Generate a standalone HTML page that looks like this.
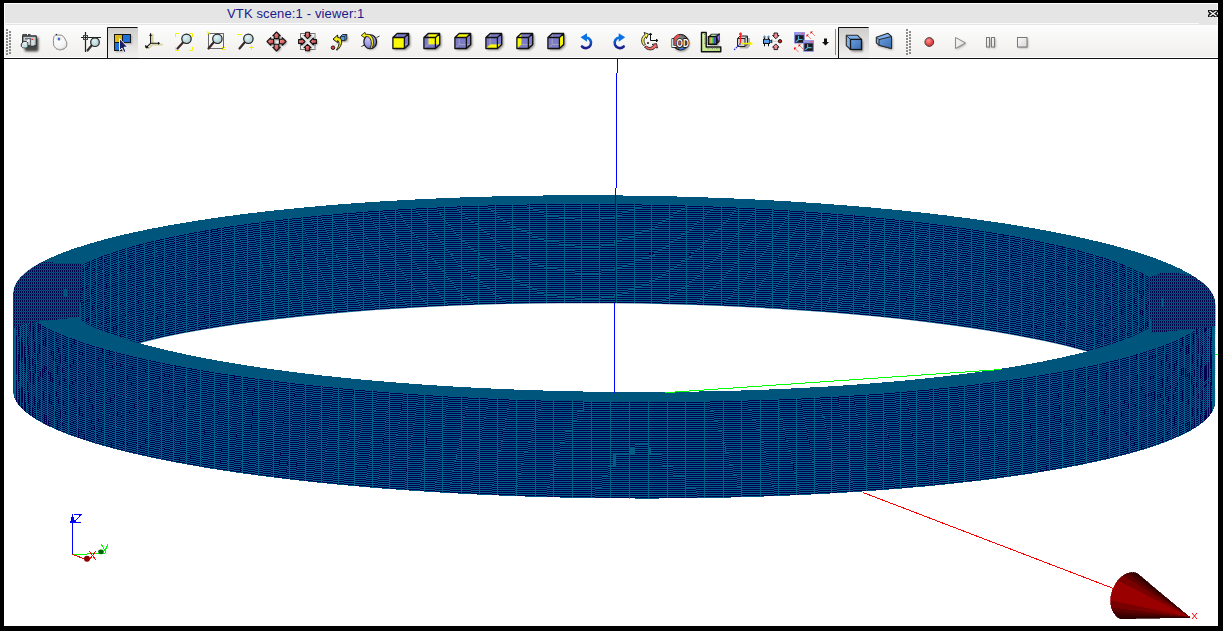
<!DOCTYPE html>
<html><head><meta charset="utf-8">
<style>
html,body{margin:0;padding:0;}
body{width:1223px;height:631px;background:#000;position:relative;overflow:hidden;font-family:"Liberation Sans",sans-serif;}
#win{position:absolute;left:4px;top:3px;width:1214px;height:623px;background:#fff;overflow:hidden;}
#title{position:absolute;left:0;top:0;width:1214px;height:22px;background:#e5e5e5;border-top:1px solid #fff;border-left:1px solid #fff;box-sizing:border-box;}
#title .t{position:absolute;left:222px;top:2px;font-size:13px;color:#1a1a8a;white-space:nowrap;letter-spacing:0.14px;}
#title .hl{position:absolute;left:0;top:19px;width:1194px;height:1px;background:#fafafa;}
#tb{position:absolute;left:0;top:22px;width:1214px;height:33px;background:linear-gradient(#fdfdfd,#f0efed);border-bottom:1px solid #fff;border-left:1px solid #fff;box-sizing:border-box;}
#tbline{position:absolute;left:0;top:55px;width:1214px;height:1px;background:#121212;}
#scene{position:absolute;left:0;top:0;}
</style></head><body>
<div id="win">
 <div id="title"><span class="t">VTK scene:1 - viewer:1</span><div class="hl"></div><div style="position:absolute;left:1212px;top:0;width:1px;height:21px;background:#fafafa"></div></div>
 <div id="tb"></div>
 <div id="tbline"></div>
</div>
<svg id="scene" width="1223" height="631" viewBox="0 0 1223 631">
<defs><clipPath id="vp"><rect x="4" y="59" width="1214" height="567"/></clipPath></defs>
<g><defs>
<linearGradient id="gcube" x1="0" y1="0" x2="1" y2="1"><stop offset="0" stop-color="#6a9ee0"/><stop offset="1" stop-color="#3a6cb0"/></linearGradient>
<linearGradient id="gplay" x1="0" y1="0" x2="1" y2="1"><stop offset="0" stop-color="#fafafa"/><stop offset="1" stop-color="#d8d8d8"/></linearGradient>
<linearGradient id="gruler" x1="0" y1="0" x2="1" y2="1"><stop offset="0" stop-color="#e0f8b0"/><stop offset="1" stop-color="#b4d878"/></linearGradient>
<linearGradient id="grain" x1="0" y1="0" x2="1" y2="0"><stop offset="0" stop-color="#f05070"/><stop offset="0.3" stop-color="#b0e040"/><stop offset="0.55" stop-color="#40d040"/><stop offset="0.8" stop-color="#4050d0"/><stop offset="1" stop-color="#9060d0"/></linearGradient>
<linearGradient id="grain2" x1="0" y1="0" x2="1" y2="0"><stop offset="0" stop-color="#f0a0a0"/><stop offset="0.4" stop-color="#a0f080"/><stop offset="0.8" stop-color="#7070e0"/><stop offset="1" stop-color="#a070e0"/></linearGradient>
<radialGradient id="glod" cx="0.4" cy="0.35" r="0.75"><stop offset="0" stop-color="#9a9a9a"/><stop offset="1" stop-color="#3a3a3a"/></radialGradient>
<radialGradient id="gsph" cx="0.35" cy="0.3" r="0.8"><stop offset="0" stop-color="#c4c4fc"/><stop offset="0.6" stop-color="#9494e0"/><stop offset="1" stop-color="#40407c"/></radialGradient>
<filter id="blur1" x="-30%" y="-30%" width="160%" height="160%"><feGaussianBlur stdDeviation="0.9"/></filter>
<radialGradient id="gmouse" cx="0.4" cy="0.35" r="0.75"><stop offset="0" stop-color="#ffffff"/><stop offset="0.7" stop-color="#f2f2f2"/><stop offset="1" stop-color="#c8c8c8"/></radialGradient>
<linearGradient id="gpress" x1="0" y1="0" x2="0" y2="1"><stop offset="0" stop-color="#cfcdcb"/><stop offset="1" stop-color="#f1f0ef"/></linearGradient>
<linearGradient id="gblue" x1="0" y1="0" x2="0" y2="1"><stop offset="0" stop-color="#0a78e8"/><stop offset="1" stop-color="#1c1c8a"/></linearGradient>
<radialGradient id="gred" cx="0.4" cy="0.35" r="0.7"><stop offset="0" stop-color="#ff9090"/><stop offset="1" stop-color="#d02020"/></radialGradient>
<radialGradient id="glens" cx="0.4" cy="0.35" r="0.7"><stop offset="0" stop-color="#e0f4f6"/><stop offset="1" stop-color="#a8c8cc"/></radialGradient>
<linearGradient id="garrow" x1="0" y1="0" x2="1" y2="1"><stop offset="0" stop-color="#f4a4a4"/><stop offset="1" stop-color="#c83030"/></linearGradient>
</defs>
<!-- grip -->
<g fill="#8c8c8c">
<path d="M6 29h2v2h-2zM6 32h2v2h-2zM6 35h2v2h-2zM6 38h2v2h-2zM6 41h2v2h-2zM6 44h2v2h-2zM6 47h2v2h-2zM6 50h2v2h-2zM6 53h2v2h-2z"/>
<path d="M9 31h2v2h-2zM9 34h2v2h-2zM9 37h2v2h-2zM9 40h2v2h-2zM9 43h2v2h-2zM9 46h2v2h-2zM9 49h2v2h-2zM9 52h2v2h-2z"/>
<path d="M906 29h2v2h-2zM906 32h2v2h-2zM906 35h2v2h-2zM906 38h2v2h-2zM906 41h2v2h-2zM906 44h2v2h-2zM906 47h2v2h-2zM906 50h2v2h-2zM906 53h2v2h-2z"/>
<path d="M909 31h2v2h-2zM909 34h2v2h-2zM909 37h2v2h-2zM909 40h2v2h-2zM909 43h2v2h-2zM909 46h2v2h-2zM909 49h2v2h-2zM909 52h2v2h-2z"/>
</g>
<!-- pressed buttons -->
<rect x="107" y="27" width="31" height="31" fill="url(#gpress)"/>
<path d="M107.5 58V27.5H137.5" fill="none" stroke="#111" stroke-width="1"/>
<rect x="838" y="27" width="31" height="31" fill="url(#gpress)"/>
<path d="M838.5 58V27.5H868.5" fill="none" stroke="#111" stroke-width="1"/>
<path d="M835.5 29V55" stroke="#8a8a8a" stroke-width="1"/>
<!-- 1 camera -->
<g>
<path d="M24.5 37.5H38.5V49.5C38.5 50.5 37.5 51.5 36.5 51.5H26.5C25 51.5 24.5 50.5 24.5 49.5Z" fill="#1e1e1e" opacity="0.8" filter="url(#blur1)"/>
<path d="M22 35.2H36C36.5 35.2 36.8 35.6 36.8 36.2V45.6C36.8 46.1 36.5 46.4 36 46.4H22Z" fill="#2e3236"/>
<path d="M22.5 33.9H27V35.5H22.5ZM28 33.9H30.5V35.5H28Z" fill="#2e3236"/>
<path d="M23.5 34.4H26.3M28.5 34.4H30" stroke="#6a7074" stroke-width="0.6"/>
<rect x="23.2" y="36.6" width="12.4" height="8.6" fill="#8e989e"/>
<rect x="23.8" y="37.1" width="11.3" height="7.6" fill="#c4ccd0"/>
<path d="M25 38.8H30" stroke="#3a3e42" stroke-width="0.9"/>
<rect x="30.6" y="38" width="3.5" height="7.6" fill="#d6dde0"/>
<path d="M30.6 38V45.6" stroke="#3a3e42" stroke-width="0.8"/>
<rect x="31.4" y="38.7" width="2" height="1.2" fill="#f01818"/>
<path d="M35.4 37V45" stroke="#9aa4a8" stroke-width="0.8"/>
<path d="M26.5 42.5L29.2 39.6" stroke="#fafafa" stroke-width="1.5"/>
<path d="M21.3 44L23.6 41.4H26.3L27.6 42.8V46.6L26.6 47.7H22.7L21.3 46.3Z" fill="#e8eaea" stroke="#161616" stroke-width="0.9"/>
<path d="M22.8 47.1H26.4L27 46.3V43.2" fill="none" stroke="#8ee0e8" stroke-width="0.9"/>
<path d="M22.6 44.5L25.5 46" stroke="#b8bcbc" stroke-width="0.6"/>
</g>
<!-- 2 mouse -->
<g>
<path d="M54 36.5C54.5 35.3 56 35 57.5 35L61 35.2C62.5 35.5 63.5 36.5 64.5 38L66.5 41.8C67 43 67 45.5 66.2 47C65 49 62 50 59.5 49.8C56.5 49.5 54.5 47.5 53.6 45C53.2 43 53.3 38.5 54 36.5Z" fill="url(#gmouse)" stroke="#7e7e7e" stroke-width="0.9"/>
<ellipse cx="59" cy="38.8" rx="2.8" ry="1.7" fill="#e0dcd0" opacity="0.9"/>
<ellipse cx="58.9" cy="39" rx="1.1" ry="1.6" fill="#3a62d8"/>
<circle cx="56.4" cy="34.6" r="0.8" fill="#333"/>
<path d="M56 48.5C58 50 62 50 64.5 48.5" stroke="#a8a8a8" stroke-width="1" fill="none"/>
</g>
<!-- 3 crosshair zoom -->
<g>
<path d="M85.5 32V52M81 37.5H101" stroke="#222" stroke-width="1.2"/>
<rect x="83.5" y="35.5" width="4" height="4" fill="none" stroke="#444" stroke-width="1"/>
<path d="M92 45L87.5 50.5" stroke="#333" stroke-width="2.2" stroke-linecap="round"/>
<circle cx="95" cy="42.2" r="4.3" fill="url(#glens)" stroke="#222" stroke-width="1.2"/>
</g>
<!-- 4 select (pressed) -->
<g>
<path d="M115.5 35.5H132.5V44.5H124V52.5H115.5Z" fill="#000" opacity="0.15"/>
<path d="M114 34H131V43H122.5V51H114Z" fill="#161616"/>
<rect x="115" y="35" width="7" height="7" fill="#d8b81c"/>
<rect x="123" y="35" width="7" height="7" fill="#1f70d8"/>
<rect x="115" y="43" width="7" height="7" fill="#1f70d8"/>
<path d="M119.5 38.5V50.5L122 48 124 52.5 126 51.5 124 47.3 127.5 47Z" fill="#1a2060" stroke="#fff" stroke-width="0.9"/>
</g>
<!-- 5 trihedron -->
<g fill="none">
<path d="M152.6 34V44.6H162.7M152.6 44.6L148 48.8" stroke="#d6d09a" stroke-width="1.7"/>
<path d="M150.6 33.2V43.3H159.9M150.6 43.3L146.8 46.8" stroke="#111" stroke-width="1.1"/>
<path d="M149.2 35.3H152M158.5 42V44.6" stroke="#111" stroke-width="0.9"/>
<path d="M145.5 45.5L146 48 148.3 47.5Z" fill="#111" stroke="#111" stroke-width="0.9"/>
</g>
<!-- 6 fit all -->
<g>
<path d="M175.5 37V33.5H179M189 33.5H192.5V37M175.5 47V50.5H179M189 50.5H192.5V47" fill="none" stroke="#f4f400" stroke-width="1"/>
<path d="M183 42.5L177.5 48.5" stroke="#3a2a2a" stroke-width="2.2" stroke-linecap="round"/>
<circle cx="186.5" cy="38.8" r="4.7" fill="url(#glens)" stroke="#222" stroke-width="1.2"/>
</g>
<!-- 7 fit area -->
<g>
<rect x="208.5" y="33.5" width="15" height="15" fill="none" stroke="#6a6a6a" stroke-width="1"/>
<path d="M213.5 42.5L208.5 48.5" stroke="#3a2a2a" stroke-width="2.2" stroke-linecap="round"/>
<circle cx="217.4" cy="38.8" r="4.7" fill="url(#glens)" stroke="#222" stroke-width="1.2"/>
<path d="M207 31.5L210 34.5M210 31.5L207 34.5M222 47L225 50M225 47L222 50" stroke="#f0f000" stroke-width="1"/>
</g>
<!-- 8 zoom -->
<g>
<path d="M244.5 42.5L239.5 48.5" stroke="#3a2a2a" stroke-width="2.2" stroke-linecap="round"/>
<circle cx="248.4" cy="38.8" r="4.7" fill="url(#glens)" stroke="#222" stroke-width="1.2"/>
<path d="M237 34.5H242M249 47.5H254M251.5 45V50" stroke="#f0f000" stroke-width="1"/>
</g>
<!-- 9 pan -->
<g filter="url(#blur1)" opacity="0.5" fill="#000"><path d="M277.5 33L281.5 37H280V40H275V37H273.5ZM277.5 52L281.5 48H280V45H275V48H273.5ZM268 42.5L272 38.5V40H275V45H272V46.5ZM287 42.5L283 38.5V40H280V45H283V46.5Z"/></g>
<g fill="url(#garrow)" stroke="#111" stroke-width="1.1" stroke-linejoin="round">
<path d="M276.5 32L280.3 35.8H278.8V38.6H274.2V35.8H272.7Z"/>
<path d="M276.5 51L280.3 47.2H278.8V44.2H274.2V47.2H272.7Z"/>
<path d="M267 41.5L270.8 37.7V39.2H273.6V43.8H270.8V45.3Z"/>
<path d="M286 41.5L282.2 37.7V39.2H279.4V43.8H282.2V45.3Z"/>
</g>
<!-- 10 global pan -->
<g>
<rect x="300.5" y="33.5" width="14.5" height="16" fill="#fafafa" stroke="#777" stroke-width="1"/>
<path d="M301 34L314.5 49M314.5 34L301 49" stroke="#e2e2e2" stroke-width="1"/>
<g filter="url(#blur1)" opacity="0.45" fill="#000"><path d="M308.5 39.6L312 36.2H310.4V33.2H306.6V36.2H305ZM308.5 45.3L312 48.7H310.4V51.7H306.6V48.7H305ZM306 42.5L302.6 39V40.6H299.6V44.4H302.6V46ZM311 42.5L314.4 39V40.6H317.4V44.4H314.4V46Z"/></g>
<g fill="url(#garrow)" stroke="#111" stroke-width="1.1" stroke-linejoin="round">
<path d="M307.5 38.6L311 35.2H309.4V32.2H305.6V35.2H304Z"/>
<path d="M307.5 44.3L311 47.7H309.4V50.7H305.6V47.7H304Z"/>
<path d="M305 41.5L301.6 38V39.6H298.6V43.4H301.6V45Z"/>
<path d="M310 41.5L313.4 38V39.6H316.4V43.4H313.4V45Z"/>
</g>
</g>
<!-- 11 rotation point -->
<g>
<path d="M340.5 37H347.5V41.5H340.5Z" fill="#000" opacity="0.5" filter="url(#blur1)"/>
<path d="M340.5 36.5L342.5 34.5H346.8V38.8L344.8 40.6H340.5Z" fill="#5a9ae0" stroke="#1a1a1a" stroke-width="0.9"/>
<path d="M340.5 36.5H344.8V40.6M344.8 36.5L346.8 34.5" fill="none" stroke="#1a1a1a" stroke-width="0.7"/>
<path d="M337 50.3C340.5 47.5 342.6 43 341.2 39.5 340.5 38 339.2 37.5 337.8 37.6L337.6 35 333 39.2 337.8 42.8 337.7 40.5C338.8 41.5 339.2 43.2 338.8 45 338.3 47 337.3 48.8 336.4 49.8Z" fill="#f4ec10" stroke="#111" stroke-width="1"/>
<path d="M334.5 46.3L338.5 42" stroke="#777" stroke-width="0.6" stroke-dasharray="0.8 0.8"/>
<circle cx="333" cy="47.7" r="1.8" fill="#e83838" stroke="#111" stroke-width="0.9"/>
</g>
<!-- 12 rotate -->
<g>
<path d="M361.3 46.6L364.5 45M376.5 37.6L379.5 36" stroke="#222" stroke-width="0.9"/>
<ellipse cx="371" cy="42.8" rx="6.5" ry="7" fill="#000" opacity="0.35" filter="url(#blur1)"/>
<ellipse cx="370.2" cy="41.8" rx="6.4" ry="7" fill="url(#gsph)" stroke="#111" stroke-width="1.1"/>
<path d="M371.6 48.6C374.2 45 374.4 38.6 370.6 35.2 369.4 34.3 367.2 34.1 365.7 34.5L365 32.3 361.2 35.4 365.2 38.2 365.5 36.6C366.8 36.4 368.4 36.7 369.3 37.6 372 40.5 371.8 45.5 370 48.3Z" fill="#f4ec10" stroke="#111" stroke-width="0.8"/>
</g>
<!-- 19/20 rotate arrows -->
<g fill="none" stroke="url(#gblue)" stroke-width="2.6" stroke-linecap="round">
<path d="M582 46.5A5.3 5.3 0 1 0 586 37.5"/>
<path d="M623.7 46.5A5.3 5.3 0 1 1 619.7 37.5"/>
</g>
<path d="M580.5 37.3L587 33.2V41.8Z" fill="#0a72e4"/>
<path d="M625.2 37.3L618.7 33.2V41.8Z" fill="#0a72e4"/>
<!-- 21 reset -->
<g>
<path d="M643.5 45.5C640.5 42 641 37 645 34.5L644 32.5 648.5 34 646.5 38.5 646 36.8C643.5 38.5 643.5 42 645.5 44.5Z" fill="#f4f060" stroke="#222" stroke-width="0.9"/>
<path d="M644.5 47C647 50.5 653 51 655.5 47.5L657.5 48 656.5 43.5 652 44.5 653.5 45.5C651.5 48 648 48 646.5 46Z" fill="#f86a6a" stroke="#222" stroke-width="0.9"/>
<path d="M650.5 33V40.5H658M649.2 35L650.5 33 651.8 35M656 39.2L658 40.5 656 41.8" fill="none" stroke="#111" stroke-width="1"/>
<circle cx="648" cy="43" r="1" fill="#111"/>
</g>
<!-- 22 LOD -->
<g>
<circle cx="681.5" cy="43.5" r="8" fill="#000" opacity="0.45" filter="url(#blur1)"/>
<circle cx="680.5" cy="42.2" r="7.8" fill="url(#glod)" stroke="#111" stroke-width="1"/>
<path d="M675 45A7 7 0 0 1 679 35.3" fill="none" stroke="#f04848" stroke-width="2.4"/>
<path d="M679.5 48.5A6.8 6.8 0 0 0 684.5 47.2" fill="none" stroke="#3a7ae8" stroke-width="1.8"/>
<text transform="translate(680.2 46.8) scale(0.8 1)" text-anchor="middle" font-family="Liberation Sans" font-weight="bold" font-size="10.2" fill="#fff" stroke="#111" stroke-width="1.7" paint-order="stroke" stroke-linejoin="round">LOD</text>
</g>
<!-- 23 graduated axes -->
<g>
<path d="M701.5 32.5H706.2V47H720.8V51.8H701.5Z" fill="url(#gruler)" stroke="#111" stroke-width="1.4" stroke-linejoin="round"/>
<path d="M704 34.5H706M704.5 36.7H706M704 38.9H706M704.5 41.1H706M704 43.3H706M708 47V49M710.2 47V48.5M712.4 47V49M714.6 47V48.5M716.8 47V49M719 47V48.5" stroke="#666" stroke-width="0.8"/>
<path d="M709.5 38H719V46H710Z" fill="#555" opacity="0.5" filter="url(#blur1)"/>
<path d="M708.3 36.5L711.3 33.8H719.7V41.7L716.6 44.4H708.3Z" fill="#222"/>
<path d="M711.6 34.6H719V41.2L717.2 37.2H710.5Z" fill="url(#grain2)"/>
<rect x="709.2" y="37.4" width="6.6" height="6.2" fill="url(#grain)"/>
<path d="M708.3 36.5H716.6V44.4H708.3ZM716.6 36.5L719.7 33.8" fill="none" stroke="#111" stroke-width="1.2"/>
</g>
<!-- 24 trihedron cube -->
<g>
<path d="M738.5 38.5L741 36.5H748.5V44.5L746 47H738.5Z" fill="#333" opacity="0.35" transform="translate(1.5 1.5)"/>
<path d="M737.5 38.5L740 36H747.5V44L745 46.5H737.5Z" fill="#d2d2d2" stroke="#222" stroke-width="1"/>
<path d="M737.5 38.5H745V46.5M745 38.5L747.5 36" fill="none" stroke="#222" stroke-width="1"/>
<path d="M740.5 43.5V32.5M739 34H742" stroke="#ff2020" stroke-width="1.3"/>
<path d="M740.5 43.5H752.5M750.5 42V45" stroke="#f0f000" stroke-width="1.3"/>
<path d="M740.5 43.5L733.5 50.5" stroke="#2a2ae8" stroke-width="1.3" stroke-dasharray="1.5 1"/>
</g>
<!-- 25 camera focus -->
<g>
<path d="M764.5 37.5V39.5M768.5 37.5V39.5M764.5 43.5V46.3M768.5 43.5V46.3" stroke="#111" stroke-width="1"/>
<path d="M764.5 35.8L765.6 36.9 764.5 38 763.4 36.9ZM768.5 35.8L769.6 36.9 768.5 38 767.4 36.9Z" fill="#5aa0e8" stroke="#222" stroke-width="0.5"/>
<rect x="763.5" y="39.3" width="6" height="4.2" fill="#5aa0e8" stroke="#111" stroke-width="1"/>
<rect x="769.6" y="40.3" width="1.8" height="2.2" fill="#5aa0e8" stroke="#111" stroke-width="0.6"/>
<path d="M771.8 39.6V43.2" stroke="#111" stroke-width="0.9"/>
<path d="M773.5 41.3H778" stroke="#888" stroke-width="0.9" stroke-dasharray="0.8 1.2"/>
<path d="M774 33H777.6V35.5H779L775.8 38.8 772.6 35.5H774Z" fill="#f08a98" stroke="#111" stroke-width="0.9"/>
<path d="M774 49.6H777.6V47.2H779L775.8 43.9 772.6 47.2H774Z" fill="#f08a98" stroke="#111" stroke-width="0.9"/>
<circle cx="780" cy="41.2" r="1.7" fill="#e01818" stroke="#111" stroke-width="0.9"/>
</g>
<!-- 26 sync -->
<g><rect x="794.2" y="32.1" width="10.6" height="11.4" fill="#7a7ad8"/><rect x="794.2" y="32.1" width="10.6" height="2.3" fill="#9a9ae8"/><rect x="801.2" y="32.9" width="3" height="1.2" fill="#f06070"/>
<rect x="795.3000000000001" y="35.2" width="8.4" height="7.5" fill="#1c1c1c"/>
<path d="M798.5 36.1V39.5H802.5M798.5 39.5L796.2 41.7" fill="none" stroke="#5ab0dc" stroke-width="1.2"/><rect x="803.3" y="40.3" width="10.6" height="11.4" fill="#7a7ad8"/><rect x="803.3" y="40.3" width="10.6" height="2.3" fill="#9a9ae8"/><rect x="810.3" y="41.099999999999994" width="3" height="1.2" fill="#f06070"/>
<rect x="804.4" y="43.4" width="8.4" height="7.5" fill="#1c1c1c"/>
<path d="M807.5999999999999 44.3V47.699999999999996H811.5999999999999M807.5999999999999 47.699999999999996L805.3 49.9" fill="none" stroke="#5ab0dc" stroke-width="1.2"/>
<path d="M807.5 35.5L810.5 38.5M811.5 32.5L814.5 35.5M799.5 45.5L802.5 48.5M795 48.5L798 51.5" stroke="#e80808" stroke-width="1" stroke-dasharray="1 0.6"/>
<path d="M806.5 34.5H809L806.5 37ZM810.5 31.5H813L810.5 34ZM798.5 44.5H801L798.5 47ZM794 47.5H796.5L794 50Z" fill="#e80808"/>
</g>
<!-- extension arrow -->
<path d="M824 38.5H827V42H829L825.5 45.5 822 42H824Z" fill="#111"/>
<!-- 27 parallel -->
<g>
<path d="M848 41H863V51.5H852Z" fill="#000" opacity="0.45" filter="url(#blur1)"/>
<path d="M846.3 35.3H857.6L861.5 39.4V49.5H850.5L846.3 45.6Z" fill="#7eb0ee" stroke="#2a2a2a" stroke-width="1.1" stroke-linejoin="round"/>
<path d="M846.8 36L850.5 39.4H861" fill="none" stroke="#333" stroke-width="0.9"/>
<rect x="850.5" y="39.4" width="11" height="10.1" fill="url(#gcube)" stroke="#161616" stroke-width="1.3"/>
</g>
<!-- 28 perspective -->
<g>
<path d="M878 39L892.5 37.5V50L878 46Z" fill="#000" opacity="0.45" filter="url(#blur1)"/>
<path d="M876.3 37.2L887.8 33.2 891.5 36.5V48.5L879 45.2 876.3 42.8Z" fill="#7eb0ee" stroke="#2a2a2a" stroke-width="1.1" stroke-linejoin="round"/>
<path d="M879 39.6L891.5 36.5V48.5L879 45.2Z" fill="url(#gcube)" stroke="#2a2a2a" stroke-width="1"/>
<path d="M876.6 37.5L879 39.6" stroke="#333" stroke-width="0.8"/>
</g>
<!-- record/play/pause/stop -->
<circle cx="929.3" cy="42" r="4.4" fill="url(#gred)" stroke="#333" stroke-width="0.9"/>
<g filter="url(#blur1)" fill="#555" opacity="0.55"><path d="M956.5 38.5L966.5 44 956.5 49.5Z"/><rect x="987.5" y="38.5" width="3" height="9.5"/><rect x="992.5" y="38.5" width="3" height="9.5"/><rect x="1018.5" y="38.5" width="9.5" height="9.5"/></g>
<path d="M955.5 37.5L965.5 43 955.5 48.5Z" fill="url(#gplay)" stroke="#8a8a8a" stroke-width="1"/>
<g fill="url(#gplay)" stroke="#7a7a7a" stroke-width="1"><rect x="986.5" y="37.5" width="3" height="9.5"/><rect x="991.5" y="37.5" width="3" height="9.5"/><rect x="1017.5" y="37.5" width="9.5" height="9.5"/></g>
<!-- close -->
<path d="M1208 10H1212L1213 11 1214 10H1218V12L1216.5 13.5 1218 15V17H1214L1213 16 1212 17H1208V15L1209.5 13.5 1208 12Z" fill="#111"/>
<path d="M1209.5 11L1216.5 16.2M1216.5 11L1209.5 16.2" stroke="#fff" stroke-width="1.3"/>

<g><path d="M394.5 50.1 394.5 39.1 398.8 35.1 410.3 35.1 410.3 46.1 406.0 50.1Z" fill="#000" opacity="0.45" filter="url(#blur1)"/><path d="M392.9 48.5 392.9 37.5 397.2 33.5 408.7 33.5 408.7 44.5 404.4 48.5Z" fill="#7b7bc9"/><path d="M397.2 33.5V44.5H408.7M392.9 48.5L397.2 44.5" fill="none" stroke="#a8a8b0" stroke-width="0.9"/><path d="M392.9 37.5 404.4 37.5 404.4 48.5 392.9 48.5Z" fill="#f8f80a"/><path d="M392.9 37.5 404.4 37.5 404.4 48.5 392.9 48.5ZM392.9 37.5L397.2 33.5H408.7V44.5L404.4 48.5M404.4 37.5L408.7 33.5" fill="none" stroke="#111" stroke-width="1.3" stroke-linejoin="round"/></g>
<g><path d="M425.5 50.1 425.5 39.1 429.8 35.1 441.3 35.1 441.3 46.1 437.0 50.1Z" fill="#000" opacity="0.45" filter="url(#blur1)"/><path d="M423.9 48.5 423.9 37.5 428.2 33.5 439.7 33.5 439.7 44.5 435.4 48.5Z" fill="#7b7bc9"/><path d="M428.2 33.5 439.7 33.5 439.7 44.5 428.2 44.5Z" fill="#f8f80a"/><path d="M428.2 33.5V44.5H439.7M423.9 48.5L428.2 44.5" fill="none" stroke="#a8a8b0" stroke-width="0.9"/><path d="M423.9 37.5 435.4 37.5 435.4 48.5 423.9 48.5ZM423.9 37.5L428.2 33.5H439.7V44.5L435.4 48.5M435.4 37.5L439.7 33.5" fill="none" stroke="#111" stroke-width="1.3" stroke-linejoin="round"/></g>
<g><path d="M456.5 50.1 456.5 39.1 460.8 35.1 472.3 35.1 472.3 46.1 468.0 50.1Z" fill="#000" opacity="0.45" filter="url(#blur1)"/><path d="M454.9 48.5 454.9 37.5 459.2 33.5 470.7 33.5 470.7 44.5 466.4 48.5Z" fill="#7b7bc9"/><path d="M459.2 33.5V44.5H470.7M454.9 48.5L459.2 44.5" fill="none" stroke="#a8a8b0" stroke-width="0.9"/><path d="M454.9 37.5 459.2 33.5 470.7 33.5 466.4 37.5Z" fill="#f8f80a"/><path d="M454.9 37.5 466.4 37.5 466.4 48.5 454.9 48.5ZM454.9 37.5L459.2 33.5H470.7V44.5L466.4 48.5M466.4 37.5L470.7 33.5" fill="none" stroke="#111" stroke-width="1.3" stroke-linejoin="round"/></g>
<g><path d="M487.5 50.1 487.5 39.1 491.8 35.1 503.3 35.1 503.3 46.1 499.0 50.1Z" fill="#000" opacity="0.45" filter="url(#blur1)"/><path d="M485.9 48.5 485.9 37.5 490.2 33.5 501.7 33.5 501.7 44.5 497.4 48.5Z" fill="#7b7bc9"/><path d="M490.2 33.5V44.5H501.7M485.9 48.5L490.2 44.5" fill="none" stroke="#a8a8b0" stroke-width="0.9"/><path d="M485.9 48.5 490.2 44.5 501.7 44.5 497.4 48.5Z" fill="#f8f80a"/><path d="M485.9 37.5 497.4 37.5 497.4 48.5 485.9 48.5ZM485.9 37.5L490.2 33.5H501.7V44.5L497.4 48.5M497.4 37.5L501.7 33.5" fill="none" stroke="#111" stroke-width="1.3" stroke-linejoin="round"/></g>
<g><path d="M518.5 50.1 518.5 39.1 522.8 35.1 534.3 35.1 534.3 46.1 530.0 50.1Z" fill="#000" opacity="0.45" filter="url(#blur1)"/><path d="M516.9 48.5 516.9 37.5 521.2 33.5 532.7 33.5 532.7 44.5 528.4 48.5Z" fill="#7b7bc9"/><path d="M521.2 33.5V44.5H532.7M516.9 48.5L521.2 44.5" fill="none" stroke="#a8a8b0" stroke-width="0.9"/><path d="M516.9 37.5 521.2 33.5 521.2 44.5 516.9 48.5Z" fill="#f8f80a"/><path d="M516.9 37.5 528.4 37.5 528.4 48.5 516.9 48.5ZM516.9 37.5L521.2 33.5H532.7V44.5L528.4 48.5M528.4 37.5L532.7 33.5" fill="none" stroke="#111" stroke-width="1.3" stroke-linejoin="round"/></g>
<g><path d="M549.5 50.1 549.5 39.1 553.8 35.1 565.3 35.1 565.3 46.1 561.0 50.1Z" fill="#000" opacity="0.45" filter="url(#blur1)"/><path d="M547.9 48.5 547.9 37.5 552.2 33.5 563.7 33.5 563.7 44.5 559.4 48.5Z" fill="#7b7bc9"/><path d="M552.2 33.5V44.5H563.7M547.9 48.5L552.2 44.5" fill="none" stroke="#a8a8b0" stroke-width="0.9"/><path d="M559.4 37.5 563.7 33.5 563.7 44.5 559.4 48.5Z" fill="#f8f80a"/><path d="M547.9 37.5 559.4 37.5 559.4 48.5 547.9 48.5ZM547.9 37.5L552.2 33.5H563.7V44.5L559.4 48.5M559.4 37.5L563.7 33.5" fill="none" stroke="#111" stroke-width="1.3" stroke-linejoin="round"/></g></g>
<g clip-path="url(#vp)">
<defs><pattern id="dots" width="2" height="3" patternUnits="userSpaceOnUse"><rect width="2" height="3" fill="#00557d"/><rect width="1" height="2" fill="#00004a"/><rect x="1" y="2" width="1" height="1" fill="#003a66"/></pattern><clipPath id="cw"><path d="M1215.2 303.8A601 103.1 0.516 0 1 613.3 401.5A601 103.1 0.516 0 1 13.3 293L13.3 391.4A600.9 101.6 0.516 0 0 613.3 498.4A600.9 101.6 0.516 0 0 1215.1 402.2Z"/></clipPath><clipPath id="csil"><path d="M13.3 293A601 103.1 0.516 0 1 615.1 195.4A601 103.1 0.516 0 1 1215.2 303.8L1215.1 402.2A600.9 101.6 0.516 0 1 613.3 498.4A600.9 101.6 0.516 0 1 13.3 391.4Z"/></clipPath><clipPath id="ci"><path d="M1170.5 302.7A557.3 94.2 0.516 0 1 612.3 391.9A557.3 94.2 0.516 0 1 55.9 292.7A557.3 94.2 0.516 0 1 614 203.5A557.3 94.2 0.516 0 1 1170.5 302.7Z"/></clipPath><clipPath id="cib"><path d="M1170.4 401.1A557.3 92.8 0.516 0 1 612.4 488.9A557.3 92.8 0.516 0 1 55.9 391.1A557.3 92.8 0.516 0 1 614 303.3A557.3 92.8 0.516 0 1 1170.4 401.1Z"/></clipPath><clipPath id="cx"><rect x="81" y="0" width="1069" height="631"/></clipPath></defs>
<g shape-rendering="crispEdges">
<path d="M13.3 293A601 103.1 0.516 0 1 615.1 195.4A601 103.1 0.516 0 1 1215.2 303.8L1215.1 402.2A600.9 101.6 0.516 0 1 613.3 498.4A600.9 101.6 0.516 0 1 13.3 391.4Z" fill="#00557d"/>
<path d="M1215.2 303.8A601 103.1 0.516 0 1 613.3 401.5A601 103.1 0.516 0 1 13.3 293L13.3 391.4A600.9 101.6 0.516 0 0 613.3 498.4A600.9 101.6 0.516 0 0 1215.1 402.2Z" fill="#005e84"/>
<g clip-path="url(#cw)" fill="none"><path stroke="#000050" d="M1215.2 304.8A601 103 0.516 0 1 613.3 402.5A601 103 0.516 0 1 13.3 294M1215.2 306.9A601 103 0.516 0 1 613.3 404.5A601 103 0.516 0 1 13.3 296.1M1215.2 308.9A601 103 0.516 0 1 613.3 406.5A601 103 0.516 0 1 13.3 298.1M1215.2 311A601 102.9 0.516 0 1 613.3 408.5A601 102.9 0.516 0 1 13.3 300.2M1215.2 313A601 102.9 0.516 0 1 613.3 410.5A601 102.9 0.516 0 1 13.3 302.2M1215.2 315.1A601 102.9 0.516 0 1 613.3 412.6A601 102.9 0.516 0 1 13.3 304.3M1215.2 317.1A601 102.9 0.516 0 1 613.3 414.6A601 102.9 0.516 0 1 13.3 306.3M1215.1 319.2A601 102.8 0.516 0 1 613.3 416.6A601 102.8 0.516 0 1 13.3 308.4M1215.1 321.2A601 102.8 0.516 0 1 613.3 418.6A601 102.8 0.516 0 1 13.3 310.4M1215.1 323.3A601 102.8 0.516 0 1 613.3 420.6A601 102.8 0.516 0 1 13.3 312.5M1215.1 325.3A601 102.7 0.516 0 1 613.3 422.7A601 102.7 0.516 0 1 13.3 314.5M1215.1 327.4A601 102.7 0.516 0 1 613.3 424.7A601 102.7 0.516 0 1 13.3 316.6M1215.1 329.4A601 102.7 0.516 0 1 613.3 426.7A601 102.7 0.516 0 1 13.3 318.6M1215.1 331.5A601 102.6 0.516 0 1 613.3 428.7A601 102.6 0.516 0 1 13.3 320.7M1215.1 333.5A600.9 102.6 0.516 0 1 613.3 430.7A600.9 102.6 0.516 0 1 13.3 322.7M1215.1 335.6A600.9 102.6 0.516 0 1 613.3 432.8A600.9 102.6 0.516 0 1 13.3 324.8M1215.1 337.6A600.9 102.5 0.516 0 1 613.3 434.8A600.9 102.5 0.516 0 1 13.3 326.8M1215.1 339.7A600.9 102.5 0.516 0 1 613.3 436.8A600.9 102.5 0.516 0 1 13.3 328.9M1215.1 341.7A600.9 102.5 0.516 0 1 613.3 438.8A600.9 102.5 0.516 0 1 13.3 330.9M1215.1 343.8A600.9 102.4 0.516 0 1 613.3 440.8A600.9 102.4 0.516 0 1 13.3 333M1215.1 345.8A600.9 102.4 0.516 0 1 613.3 442.8A600.9 102.4 0.516 0 1 13.3 335M1215.1 347.9A600.9 102.4 0.516 0 1 613.3 444.9A600.9 102.4 0.516 0 1 13.3 337.1M1215.1 349.9A600.9 102.4 0.516 0 1 613.3 446.9A600.9 102.4 0.516 0 1 13.3 339.1M1215.1 352A600.9 102.3 0.516 0 1 613.3 448.9A600.9 102.3 0.516 0 1 13.3 341.2M1215.1 354A600.9 102.3 0.516 0 1 613.3 450.9A600.9 102.3 0.516 0 1 13.3 343.2M1215.1 356.1A600.9 102.3 0.516 0 1 613.3 452.9A600.9 102.3 0.516 0 1 13.3 345.3M1215.1 358.1A600.9 102.2 0.516 0 1 613.3 455A600.9 102.2 0.516 0 1 13.3 347.3M1215.1 360.2A600.9 102.2 0.516 0 1 613.3 457A600.9 102.2 0.516 0 1 13.3 349.4M1215.1 362.2A600.9 102.2 0.516 0 1 613.3 459A600.9 102.2 0.516 0 1 13.3 351.4M1215.1 364.3A600.9 102.1 0.516 0 1 613.3 461A600.9 102.1 0.516 0 1 13.3 353.5M1215.1 366.3A600.9 102.1 0.516 0 1 613.3 463A600.9 102.1 0.516 0 1 13.3 355.5M1215.1 368.4A600.9 102.1 0.516 0 1 613.3 465A600.9 102.1 0.516 0 1 13.3 357.6M1215.1 370.4A600.9 102 0.516 0 1 613.3 467.1A600.9 102 0.516 0 1 13.3 359.6M1215.1 372.5A600.9 102 0.516 0 1 613.3 469.1A600.9 102 0.516 0 1 13.3 361.7M1215.1 374.5A600.9 102 0.516 0 1 613.3 471.1A600.9 102 0.516 0 1 13.3 363.7M1215.1 376.6A600.9 101.9 0.516 0 1 613.3 473.1A600.9 101.9 0.516 0 1 13.3 365.8M1215.1 378.6A600.9 101.9 0.516 0 1 613.3 475.1A600.9 101.9 0.516 0 1 13.3 367.8M1215.1 380.7A600.9 101.9 0.516 0 1 613.3 477.2A600.9 101.9 0.516 0 1 13.3 369.9M1215.1 382.7A600.9 101.9 0.516 0 1 613.3 479.2A600.9 101.9 0.516 0 1 13.3 371.9M1215.1 384.8A600.9 101.8 0.516 0 1 613.3 481.2A600.9 101.8 0.516 0 1 13.3 374M1215.1 386.8A600.9 101.8 0.516 0 1 613.3 483.2A600.9 101.8 0.516 0 1 13.3 376M1215.1 388.9A600.9 101.8 0.516 0 1 613.3 485.2A600.9 101.8 0.516 0 1 13.3 378.1M1215.1 390.9A600.9 101.7 0.516 0 1 613.3 487.2A600.9 101.7 0.516 0 1 13.3 380.1M1215.1 393A600.9 101.7 0.516 0 1 613.3 489.3A600.9 101.7 0.516 0 1 13.3 382.2M1215.1 395A600.9 101.7 0.516 0 1 613.3 491.3A600.9 101.7 0.516 0 1 13.3 384.2M1215.1 397.1A600.9 101.6 0.516 0 1 613.3 493.3A600.9 101.6 0.516 0 1 13.3 386.3M1215.1 399.1A600.9 101.6 0.516 0 1 613.3 495.3A600.9 101.6 0.516 0 1 13.3 388.3M1215.1 401.2A600.9 101.6 0.516 0 1 613.3 497.3A600.9 101.6 0.516 0 1 13.3 390.4"/><path stroke="#005e84" d="M1215.2 304.3L1215.1 402.7M1214.7 307.5L1214.7 405.9M1213.7 310.8L1213.7 409M1212.1 314L1212.1 412.2M1209.9 317.2L1209.9 415.4M1207.2 320.3L1207.1 418.5M1203.8 323.5L1203.7 421.6M1199.9 326.6L1199.8 424.7M1195.3 329.7L1195.3 427.7M1190.2 332.8L1190.2 430.8M1184.6 335.9L1184.5 433.8M1178.4 338.9L1178.3 436.7M1171.6 341.8L1171.5 439.6M1164.2 344.7L1164.2 442.5M1156.4 347.6L1156.3 445.4M1147.9 350.4L1147.9 448.1M1139 353.2L1138.9 450.9M1129.6 355.9L1129.5 453.5M1119.6 358.6L1119.5 456.2M1109.1 361.2L1109.1 458.7M1098.2 363.7L1098.1 461.2M1086.7 366.2L1086.7 463.7M1074.8 368.6L1074.8 466M1062.5 371L1062.4 468.4M1049.7 373.2L1049.7 470.6M1036.5 375.4L1036.4 472.8M1022.8 377.5L1022.8 474.8M1008.8 379.6L1008.8 476.8M994.4 381.6L994.3 478.8M979.6 383.4L979.5 480.6M964.4 385.2L964.4 482.4M948.9 386.9L948.9 484.1M933 388.6L933 485.7M916.9 390.1L916.9 487.2M900.4 391.5L900.4 488.6M883.7 392.9L883.7 489.9M866.7 394.1L866.7 491.2M849.4 395.3L849.4 492.3M831.9 396.4L831.9 493.4M814.2 397.3L814.2 494.3M796.3 398.2L796.3 495.2M778.3 399L778.3 495.9M760 399.7L760 496.6M741.6 400.2L741.6 497.2M723.1 400.7L723.1 497.6M704.5 401.1L704.5 498M685.8 401.4L685.8 498.3M667 401.5L667 498.4M648.2 401.6L648.2 498.5M629.3 401.6L629.3 498.5M610.5 401.4L610.5 498.3M591.6 401.2L591.6 498.1M572.7 400.9L572.7 497.8M553.9 400.4L553.9 497.3M535.2 399.9L535.2 496.8M516.5 399.2L516.5 496.2M497.9 398.5L497.9 495.4M479.5 397.7L479.5 494.6M461.1 396.7L461.2 493.7M442.9 395.7L443 492.7M424.9 394.6L425 491.5M407.1 393.3L407.2 490.3M389.5 392L389.5 489M372.1 390.6L372.1 487.6M354.9 389.1L355 486.2M338 387.5L338.1 484.6M321.4 385.9L321.5 482.9M305.1 384.1L305.1 481.2M289 382.2L289.1 479.4M273.3 380.3L273.4 477.5M258 378.3L258 475.5M242.9 376.2L243 473.4M228.3 374L228.3 471.3M214 371.8L214 469.1M200.1 369.5L200.2 466.8M186.6 367.1L186.7 464.4M173.6 364.6L173.6 462M161 362.1L161 459.5M148.8 359.5L148.9 457M137.1 356.9L137.1 454.4M125.8 354.2L125.9 451.7M115.1 351.4L115.1 449M104.8 348.6L104.9 446.2M95 345.8L95.1 443.4M85.8 342.9L85.9 440.5M77.1 339.9L77.1 437.6M68.9 336.9L68.9 434.7M61.2 333.9L61.3 431.7M54.1 330.9L54.2 428.7M47.5 327.8L47.6 425.6M41.5 324.6L41.6 422.6M36.1 321.5L36.2 419.5M31.2 318.3L31.3 416.3M26.9 315.1L27 413.2M23.2 311.9L23.3 410M20.1 308.7L20.2 406.9M17.5 305.5L17.6 403.7M15.6 302.2L15.7 400.5M14.2 299L14.3 397.3M13.5 295.8L13.5 394.1"/></g>
<path d="M1215.2 303.8A601 103.1 0.516 0 1 613.3 401.5A601 103.1 0.516 0 1 13.3 293A601 103.1 0.516 0 1 615.1 195.4A601 103.1 0.516 0 1 1215.2 303.8ZM1170.5 302.7A557.3 94.2 0.516 0 1 612.3 391.9A557.3 94.2 0.516 0 1 55.9 292.7A557.3 94.2 0.516 0 1 614 203.5A557.3 94.2 0.516 0 1 1170.5 302.7Z" fill="#00557d" fill-rule="evenodd"/>
<path clip-path="url(#cx)" d="M1170.5 302.7A557.3 94.2 0.516 0 1 612.3 391.9A557.3 94.2 0.516 0 1 55.9 292.7A557.3 94.2 0.516 0 1 614 203.5A557.3 94.2 0.516 0 1 1170.5 302.7Z" fill="#005e84"/>
<g clip-path="url(#cx)"><g clip-path="url(#ci)" fill="none"><path stroke="#000050" d="M55.9 293.7A557.3 94.2 0.516 0 1 614 204.6A557.3 94.2 0.516 0 1 1170.5 303.8M55.9 295.8A557.3 94.2 0.516 0 1 614 206.6A557.3 94.2 0.516 0 1 1170.5 305.8M55.9 297.8A557.3 94.1 0.516 0 1 614 208.7A557.3 94.1 0.516 0 1 1170.5 307.8M55.9 299.9A557.3 94.1 0.516 0 1 614 210.8A557.3 94.1 0.516 0 1 1170.5 309.9M55.9 301.9A557.3 94.1 0.516 0 1 614 212.9A557.3 94.1 0.516 0 1 1170.5 311.9M55.9 304A557.3 94 0.516 0 1 614 214.9A557.3 94 0.516 0 1 1170.5 314M55.9 306A557.3 94 0.516 0 1 614 217A557.3 94 0.516 0 1 1170.5 316M55.9 308.1A557.3 94 0.516 0 1 614 219.1A557.3 94 0.516 0 1 1170.5 318.1M55.9 310.1A557.3 94 0.516 0 1 614 221.2A557.3 94 0.516 0 1 1170.5 320.1M55.9 312.2A557.3 93.9 0.516 0 1 614 223.3A557.3 93.9 0.516 0 1 1170.5 322.2M55.9 314.2A557.3 93.9 0.516 0 1 614 225.3A557.3 93.9 0.516 0 1 1170.5 324.2M55.9 316.3A557.3 93.9 0.516 0 1 614 227.4A557.3 93.9 0.516 0 1 1170.5 326.3M55.9 318.3A557.3 93.8 0.516 0 1 614 229.5A557.3 93.8 0.516 0 1 1170.5 328.3M55.9 320.4A557.3 93.8 0.516 0 1 614 231.6A557.3 93.8 0.516 0 1 1170.5 330.4M55.9 322.4A557.3 93.8 0.516 0 1 614 233.7A557.3 93.8 0.516 0 1 1170.5 332.4M55.9 324.5A557.3 93.8 0.516 0 1 614 235.7A557.3 93.8 0.516 0 1 1170.5 334.5M55.9 326.5A557.3 93.7 0.516 0 1 614 237.8A557.3 93.7 0.516 0 1 1170.5 336.5M55.9 328.6A557.3 93.7 0.516 0 1 614 239.9A557.3 93.7 0.516 0 1 1170.5 338.6M55.9 330.6A557.3 93.7 0.516 0 1 614 242A557.3 93.7 0.516 0 1 1170.5 340.6M55.9 332.7A557.3 93.6 0.516 0 1 614 244A557.3 93.6 0.516 0 1 1170.5 342.7M55.9 334.7A557.3 93.6 0.516 0 1 614 246.1A557.3 93.6 0.516 0 1 1170.5 344.7M55.9 336.8A557.3 93.6 0.516 0 1 614 248.2A557.3 93.6 0.516 0 1 1170.5 346.8M55.9 338.8A557.3 93.6 0.516 0 1 614 250.3A557.3 93.6 0.516 0 1 1170.5 348.8M55.9 340.9A557.3 93.5 0.516 0 1 614 252.4A557.3 93.5 0.516 0 1 1170.5 350.9M55.9 342.9A557.3 93.5 0.516 0 1 614 254.4A557.3 93.5 0.516 0 1 1170.5 352.9M55.9 345A557.3 93.5 0.516 0 1 614 256.5A557.3 93.5 0.516 0 1 1170.5 355M55.9 347A557.3 93.4 0.516 0 1 614 258.6A557.3 93.4 0.516 0 1 1170.5 357M55.9 349.1A557.3 93.4 0.516 0 1 614 260.7A557.3 93.4 0.516 0 1 1170.5 359.1M55.9 351.1A557.3 93.4 0.516 0 1 614 262.7A557.3 93.4 0.516 0 1 1170.5 361.1M55.9 353.2A557.3 93.4 0.516 0 1 614 264.8A557.3 93.4 0.516 0 1 1170.5 363.2M55.9 355.2A557.3 93.3 0.516 0 1 614 266.9A557.3 93.3 0.516 0 1 1170.5 365.2M55.9 357.3A557.3 93.3 0.516 0 1 614 269A557.3 93.3 0.516 0 1 1170.5 367.3M55.9 359.3A557.3 93.3 0.516 0 1 614 271.1A557.3 93.3 0.516 0 1 1170.5 369.3M55.9 361.4A557.3 93.2 0.516 0 1 614 273.1A557.3 93.2 0.516 0 1 1170.5 371.4M55.9 363.4A557.3 93.2 0.516 0 1 614 275.2A557.3 93.2 0.516 0 1 1170.5 373.4M55.9 365.5A557.3 93.2 0.516 0 1 614 277.3A557.3 93.2 0.516 0 1 1170.5 375.5M55.9 367.5A557.3 93.2 0.516 0 1 614 279.4A557.3 93.2 0.516 0 1 1170.5 377.5M55.9 369.6A557.3 93.1 0.516 0 1 614 281.5A557.3 93.1 0.516 0 1 1170.5 379.6M55.9 371.6A557.3 93.1 0.516 0 1 614 283.5A557.3 93.1 0.516 0 1 1170.5 381.6M55.9 373.7A557.3 93.1 0.516 0 1 614 285.6A557.3 93.1 0.516 0 1 1170.5 383.7M55.9 375.7A557.3 93 0.516 0 1 614 287.7A557.3 93 0.516 0 1 1170.5 385.7M55.9 377.8A557.3 93 0.516 0 1 614 289.8A557.3 93 0.516 0 1 1170.5 387.8M55.9 379.8A557.3 93 0.516 0 1 614 291.8A557.3 93 0.516 0 1 1170.5 389.8M55.9 381.9A557.3 93 0.516 0 1 614 293.9A557.3 93 0.516 0 1 1170.5 391.9M55.9 383.9A557.3 92.9 0.516 0 1 614 296A557.3 92.9 0.516 0 1 1170.5 393.9M55.9 386A557.3 92.9 0.516 0 1 614 298.1A557.3 92.9 0.516 0 1 1170.5 396M55.9 388A557.3 92.9 0.516 0 1 614 300.2A557.3 92.9 0.516 0 1 1170.5 398M55.9 390.1A557.3 92.8 0.516 0 1 614 302.2A557.3 92.8 0.516 0 1 1170.4 400.1"/><path stroke="#005e84" d="M55.9 292.2L56 390.6M56.3 289.3L56.3 387.7M57.2 286.3L57.3 384.8M58.7 283.4L58.8 381.9M60.7 280.5L60.8 379.1M63.3 277.6L63.4 376.2M66.4 274.7L66.5 373.3M70.1 271.8L70.1 370.5M74.3 269L74.3 367.7M79 266.2L79 365M84.2 263.4L84.3 362.2M90 260.7L90.1 359.5M96.3 258L96.4 356.9M103.1 255.3L103.2 354.2M110.4 252.7L110.5 351.6M118.2 250.1L118.3 349.1M126.5 247.6L126.6 346.6M135.3 245.1L135.3 344.2M144.5 242.6L144.6 341.8M154.2 240.3L154.3 339.4M164.4 237.9L164.4 337.1M175 235.7L175 334.9M186 233.5L186 332.7M197.4 231.3L197.5 330.6M209.3 229.3L209.4 328.6M221.6 227.3L221.6 326.6M234.2 225.3L234.3 324.7M247.2 223.5L247.3 322.9M260.6 221.7L260.7 321.1M274.4 220L274.4 319.4M288.4 218.3L288.5 317.8M302.8 216.8L302.8 316.3M317.5 215.3L317.5 314.8M332.5 213.9L332.5 313.4M347.8 212.6L347.8 312.1M363.3 211.3L363.3 310.9M379 210.2L379.1 309.8M395.1 209.1L395.1 308.8M411.3 208.1L411.3 307.8M427.7 207.3L427.7 306.9M444.3 206.5L444.3 306.2M461 205.8L461.1 305.5M478 205.1L478 304.9M495 204.6L495 304.3M512.2 204.2L512.2 303.9M529.4 203.8L529.4 303.6M546.8 203.6L546.8 303.3M564.2 203.4L564.2 303.2M581.7 203.4L581.7 303.1M599.2 203.4L599.2 303.2M616.7 203.5L616.7 303.3M634.2 203.8L634.2 303.5M651.7 204.1L651.6 303.8M669.1 204.5L669.1 304.2M686.5 205L686.5 304.7M703.8 205.6L703.8 305.3M721 206.2L721 306M738.2 207L738.1 306.7M755.2 207.9L755.1 307.6M772 208.8L772 308.5M788.7 209.8L788.7 309.5M805.2 211L805.2 310.6M821.6 212.2L821.5 311.8M837.7 213.5L837.7 313.1M853.6 214.8L853.6 314.5M869.3 216.3L869.3 315.9M884.7 217.8L884.7 317.4M899.9 219.4L899.8 319M914.8 221.1L914.7 320.7M929.3 222.9L929.3 322.4M943.6 224.7L943.5 324.2M957.5 226.6L957.5 326.1M971.1 228.6L971.1 328.1M984.4 230.7L984.3 330.1M997.2 232.8L997.2 332.2M1009.7 235L1009.7 334.3M1021.8 237.2L1021.8 336.5M1033.5 239.5L1033.5 338.8M1044.8 241.9L1044.8 341.1M1055.7 244.3L1055.6 343.5M1066.1 246.8L1066 346M1076.1 249.3L1076 348.4M1085.6 251.9L1085.5 351M1094.7 254.5L1094.6 353.6M1103.2 257.1L1103.2 356.2M1111.3 259.8L1111.3 358.8M1118.9 262.6L1118.9 361.5M1126.1 265.3L1126 364.2M1132.7 268.1L1132.6 367M1138.7 270.9L1138.7 369.8M1144.3 273.8L1144.2 372.6M1149.3 276.7L1149.3 375.4M1153.9 279.6L1153.8 378.3M1157.8 282.5L1157.8 381.2M1161.3 285.4L1161.2 384.1M1164.2 288.4L1164.1 387M1166.5 291.3L1166.5 389.9M1168.4 294.3L1168.3 392.8M1169.6 297.2L1169.6 395.7M1170.3 300.2L1170.3 398.6"/></g></g>
<path clip-path="url(#cib)" d="M1170.5 302.7A557.3 94.2 0.516 0 1 612.3 391.9A557.3 94.2 0.516 0 1 55.9 292.7A557.3 94.2 0.516 0 1 614 203.5A557.3 94.2 0.516 0 1 1170.5 302.7Z" fill="#fff"/>
<path clip-path="url(#csil)" d="M8 330 8 280 16 279 38 262 82 263.5 80 317 35 322 20 326Z M1149 277 1163 272.5 1180 273.5 1192 276 1220 292 1220 326 1193 329 1151 333Z" fill="url(#dots)"/>
<ellipse cx="65.5" cy="292.5" rx="1.6" ry="4.2" fill="#00557d"/><ellipse cx="1162.8" cy="302.5" rx="1.6" ry="4.6" fill="#00557d"/>
</g>
<!-- Z axis blue line -->
<path d="M617.5 59V73M616.5 73V188M615.5 188V303M614.5 303V393" stroke="#0000ff" stroke-width="1" shape-rendering="crispEdges"/>
<!-- green Y axis -->
<path d="M665 392.7L1001 369.5" stroke="#00ff00" stroke-width="1" shape-rendering="crispEdges"/>
<path d="M1215 354.5H1218" stroke="#00ff00" stroke-width="1" shape-rendering="crispEdges"/>
<!-- red X axis -->
<path d="M863 492.5L1113.5 588.5" stroke="#ff0000" stroke-width="1" shape-rendering="crispEdges"/>
<!-- cone -->
<g shape-rendering="crispEdges">
<path d="M1189.8 617.4L1137.0 573.2L1135.1 572.7Z" fill="rgb(45,0,0)" stroke="rgb(45,0,0)" stroke-width="0.7"/>
<path d="M1189.8 617.4L1135.1 572.7L1133.2 572.5Z" fill="rgb(53,0,0)" stroke="rgb(53,0,0)" stroke-width="0.7"/>
<path d="M1189.8 617.4L1133.2 572.5L1131.1 572.5Z" fill="rgb(53,0,0)" stroke="rgb(53,0,0)" stroke-width="0.7"/>
<path d="M1189.8 617.4L1131.1 572.5L1129.1 572.9Z" fill="rgb(70,0,0)" stroke="rgb(70,0,0)" stroke-width="0.7"/>
<path d="M1189.8 617.4L1129.1 572.9L1127.0 573.6Z" fill="rgb(70,0,0)" stroke="rgb(70,0,0)" stroke-width="0.7"/>
<path d="M1189.8 617.4L1127.0 573.6L1125.0 574.5Z" fill="rgb(93,0,0)" stroke="rgb(93,0,0)" stroke-width="0.7"/>
<path d="M1189.8 617.4L1125.0 574.5L1123.0 575.8Z" fill="rgb(93,0,0)" stroke="rgb(93,0,0)" stroke-width="0.7"/>
<path d="M1189.8 617.4L1123.0 575.8L1121.1 577.2Z" fill="rgb(121,0,0)" stroke="rgb(121,0,0)" stroke-width="0.7"/>
<path d="M1189.8 617.4L1121.1 577.2L1119.3 578.9Z" fill="rgb(121,0,0)" stroke="rgb(121,0,0)" stroke-width="0.7"/>
<path d="M1189.8 617.4L1119.3 578.9L1117.6 580.9Z" fill="rgb(121,0,0)" stroke="rgb(121,0,0)" stroke-width="0.7"/>
<path d="M1189.8 617.4L1117.6 580.9L1116.1 583.0Z" fill="rgb(155,0,0)" stroke="rgb(155,0,0)" stroke-width="0.7"/>
<path d="M1189.8 617.4L1116.1 583.0L1114.7 585.3Z" fill="rgb(155,0,0)" stroke="rgb(155,0,0)" stroke-width="0.7"/>
<path d="M1189.8 617.4L1114.7 585.3L1113.5 587.7Z" fill="rgb(155,0,0)" stroke="rgb(155,0,0)" stroke-width="0.7"/>
<path d="M1189.8 617.4L1113.5 587.7L1112.5 590.2Z" fill="rgb(155,0,0)" stroke="rgb(155,0,0)" stroke-width="0.7"/>
<path d="M1189.8 617.4L1112.5 590.2L1111.7 592.8Z" fill="rgb(155,0,0)" stroke="rgb(155,0,0)" stroke-width="0.7"/>
<path d="M1189.8 617.4L1111.7 592.8L1111.1 595.4Z" fill="rgb(155,0,0)" stroke="rgb(155,0,0)" stroke-width="0.7"/>
<path d="M1189.8 617.4L1111.1 595.4L1110.8 598.1Z" fill="rgb(155,0,0)" stroke="rgb(155,0,0)" stroke-width="0.7"/>
<path d="M1189.8 617.4L1110.8 598.1L1110.6 600.7Z" fill="rgb(155,0,0)" stroke="rgb(155,0,0)" stroke-width="0.7"/>
<path d="M1189.8 617.4L1110.6 600.7L1110.7 603.2Z" fill="rgb(121,0,0)" stroke="rgb(121,0,0)" stroke-width="0.7"/>
<path d="M1189.8 617.4L1110.7 603.2L1111.1 605.7Z" fill="rgb(121,0,0)" stroke="rgb(121,0,0)" stroke-width="0.7"/>
<path d="M1189.8 617.4L1111.1 605.7L1111.6 608.0Z" fill="rgb(121,0,0)" stroke="rgb(121,0,0)" stroke-width="0.7"/>
<path d="M1189.8 617.4L1111.6 608.0L1112.4 610.2Z" fill="rgb(93,0,0)" stroke="rgb(93,0,0)" stroke-width="0.7"/>
<path d="M1189.8 617.4L1112.4 610.2L1113.4 612.2Z" fill="rgb(93,0,0)" stroke="rgb(93,0,0)" stroke-width="0.7"/>
<path d="M1189.8 617.4L1113.4 612.2L1114.6 614.0Z" fill="rgb(70,0,0)" stroke="rgb(70,0,0)" stroke-width="0.7"/>
<path d="M1189.8 617.4L1114.6 614.0L1116.0 615.6Z" fill="rgb(70,0,0)" stroke="rgb(70,0,0)" stroke-width="0.7"/>
<path d="M1189.8 617.4L1116.0 615.6L1117.5 617.0Z" fill="rgb(53,0,0)" stroke="rgb(53,0,0)" stroke-width="0.7"/>
<path d="M1189.8 617.4L1117.5 617.0L1119.2 618.0Z" fill="rgb(53,0,0)" stroke="rgb(53,0,0)" stroke-width="0.7"/>
<path d="M1189.8 617.4L1119.2 618.0L1121.0 618.8Z" fill="rgb(45,0,0)" stroke="rgb(45,0,0)" stroke-width="0.7"/>
</g>
<path d="M1192 613L1197 619M1197 613L1192 619" stroke="#ff0000" stroke-width="1"/>
<!-- triad -->
<g shape-rendering="crispEdges">
<path d="M72.5 514V554" stroke="#0000ff" stroke-width="1"/>
<path d="M72.5 514L75.5 522.5H70Z" fill="#0000ff"/>
<path d="M74 514.5H81L74.5 522H81" fill="none" stroke="#0000ff" stroke-width="1"/>
<path d="M72.5 554.5H87M87 553.5H105" stroke="#00ff00" stroke-width="1"/>
<path d="M101.5 544.5L105 550.5M108 544.5L105 550.5V553" fill="none" stroke="#00ff00" stroke-width="1"/>
<path d="M72.5 554.5L85 559" stroke="#ff0000" stroke-width="1"/>
<path d="M89 551L96 560M96 551L89 560" fill="none" stroke="#ff0000" stroke-width="1"/>
</g>
<ellipse cx="101" cy="551.8" rx="2.8" ry="2.4" fill="#006400"/>
<ellipse cx="87" cy="558.8" rx="3" ry="3" fill="#8b0000"/>

</g>
</svg>
</body></html>
